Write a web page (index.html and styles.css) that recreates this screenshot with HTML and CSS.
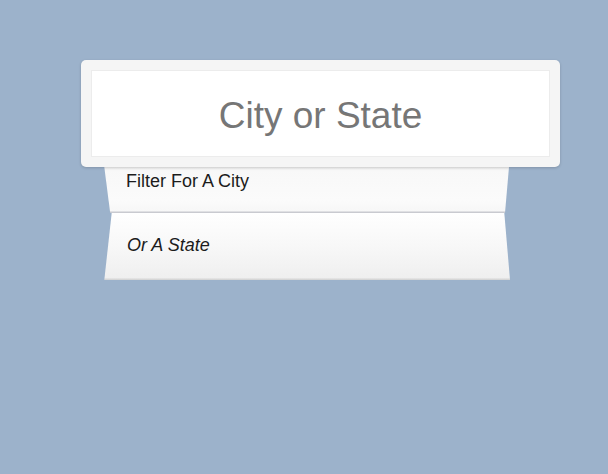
FILE: index.html
```html
<!DOCTYPE html>
<html>
<head>
<meta charset="utf-8">
<link rel="stylesheet" href="styles.css">
</head>
<body>
<div class="stage">
  <div class="search-box">
    <div class="search-input">City or State</div>
  </div>
  <ul class="suggestions">
    <li class="item item-first">Filter For A City</li>
    <li class="item item-second">Or A State</li>
  </ul>
</div>
</body>
</html>
```
FILE: styles.css
```css
html, body {
  margin: 0;
  padding: 0;
}
body {
  background: #9cb2cb;
  font-family: "Liberation Sans", Arial, sans-serif;
  width: 608px;
  height: 474px;
  overflow: hidden;
}
.stage {
  padding-top: 60px;
  padding-left: 81px;
}
.search-box {
  position: relative;
  z-index: 2;
  width: 479px;
  height: 107px;
  box-sizing: border-box;
  padding: 10px;
  background: #f5f5f5;
  border-radius: 5px;
  box-shadow: 0 1px 3px rgba(0, 0, 0, 0.18);
}
.search-input {
  height: 87px;
  box-sizing: border-box;
  background: #fff;
  border: 1px solid #ececec;
  color: #767676;
  font-size: 37px;
  display: flex;
  align-items: center;
  justify-content: center;
  padding-top: 4px;
}
.suggestions {
  list-style: none;
  margin: -7px 0 0 22px;
  padding: 0;
  width: 408px;
  position: relative;
  z-index: 1;
}
.item {
  box-sizing: border-box;
  color: #1c1c1c;
  font-size: 18px;
  display: flex;
}
.item-first {
  height: 53px;
  padding: 11px 0 0 23px;
  background: linear-gradient(to bottom, #e6e6e6 0px, #f8f8f8 10px, #fbfbfb 40px, #f7f7f7 51px, #c9cad0 52px, #c9cad0 53px);
  clip-path: polygon(0.4px 0, 406.6px 0, 402px 53px, 7.2px 53px);
}
.item-second {
  height: 67px;
  padding: 22px 0 0 24px;
  font-style: italic;
  background: linear-gradient(to bottom, #ffffff 0px, #f7f7f7 35px, #efefef 65px, #d6d6d6 66px, #d6d6d6 67px);
  clip-path: polygon(8.7px 0, 401.3px 0, 407px 67px, 1.3px 67px);
}
```
